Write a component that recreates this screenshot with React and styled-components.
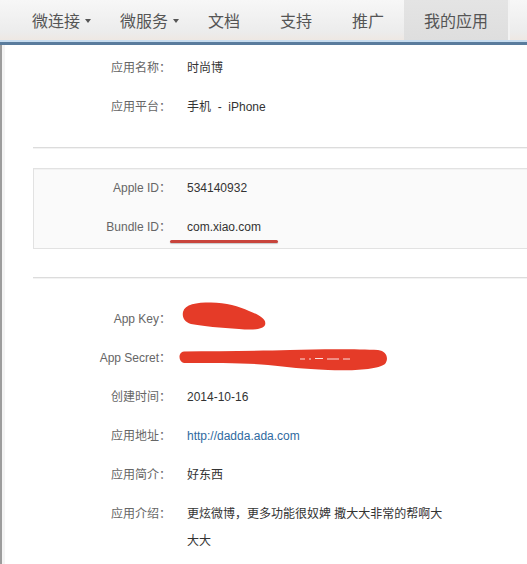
import styled, { createGlobalStyle } from "styled-components"

const GlobalStyle = createGlobalStyle`
    html, body {
        margin: 0;
        padding: 0;
        background: #fff;
    }
    body {
        font-family: "Liberation Sans", "Noto Sans CJK SC", sans-serif;
        overflow: hidden;
    }
`

const Header = styled.div`
    width: 100%;
`
const Nav = styled.div`
    height: 40px;
    display: flex;
    align-items: stretch;
    padding-left: 12px;
    background: linear-gradient(#f7f7f7 0%, #ececec 80%, #eee8e3 100%);
`
const NavItem = styled.div`
    display: flex;
    align-items: center;
    gap: 5px;
    padding: 0 ${props => props.$drop ? "9px" : "20px"} 0 20px;
    font-family: "Noto Sans CJK SC", sans-serif;
    font-size: 16px;
    color: #555;
    background: ${props => props.$active ? "linear-gradient(#e4e4e4, #dedede)" : "transparent"};
    border-right: ${props => props.$active ? "2px solid #f2f2f2" : "none"};
`
const Caret = styled.span`
    width: 0;
    height: 0;
    margin-top: 2px;
    border-left: 3px solid transparent;
    border-right: 3px solid transparent;
    border-top: 4px solid #555;
`
const BlueLine = styled.div`
    height: 3px;
    border-top: 2px solid #c8ddf0;
    background: #5a7c9d;
`
const Page = styled.div`
    min-height: 519px;
    border-left: 2px solid #9c9c9c;
    box-shadow: inset 3px 0 0 #f4f4f4;
    padding-top: 4px;
`
const Section = styled.div`
    display: flex;
    flex-direction: column;
`
const Divider = styled.div`
    margin: ${props => props.$margin};
    margin-left: 31px;
    border-top: 1px solid #dcdcdc;
    border-bottom: 1px solid #f3f3f3;
`
const Box = styled.div`
    margin-left: 31px;
    margin-right: -4px;
    background: #fafafa;
    border: 1px solid #e2e2e2;
    box-shadow: inset 0 1px 0 #f2f2f2;
    display: flex;
    flex-direction: column;
`
const Row = styled.div`
    display: grid;
    grid-template-columns: ${props => props.$labelWidth}px 1fr;
    padding: ${props => props.$pad || "6px 0"};
    font-size: 12px;
    line-height: 27px;
`
const Label = styled.div`
    text-align: right;
    color: #666;
    white-space: nowrap;
`
const Value = styled.div`
    position: relative;
    margin-left: 16px;
    color: #333;
    max-width: 265px;
`
const Link = styled.a`
    color: #2f6aa0;
    text-decoration: none;
`
const Underline = styled.div`
    position: absolute;
    left: -17px;
    top: 26px;
    width: 108px;
    height: 3px;
    border-radius: 2px;
    background: #c8443c;
    box-shadow: 0 1px 1px rgba(0, 0, 0, 0.2);
`
const Scribble = styled.svg`
    position: absolute;
    left: ${props => props.$left}px;
    top: ${props => props.$top}px;
`

const AppKeyMark = () => (
    <Scribble $left={-6} $top={-4} width="88" height="30" viewBox="0 0 88 30">
        <path
            d="M2 10 C 4 2, 15 0.5, 30 0.5 C 45 1, 58 4, 68 9 C 78 13, 86 17, 84 23 C 82 28, 70 28, 58 27 C 40 26, 22 24, 10 22 C 3 20, 1 15, 2 10 Z"
            fill="#e53b28"
        />
    </Scribble>
)

const AppSecretMark = () => (
    <Scribble $left={-9} $top={4} width="214" height="24" viewBox="0 0 214 24">
        <path
            d="M6 2.5 C 40 2, 80 2, 112 1 C 140 0, 180 0, 200 1 C 209 2, 211 10, 207 15 C 200 21, 170 22, 150 21 C 125 20, 110 18, 90 16 C 70 14, 40 14, 6 14 C 0 13, 0 3, 6 2.5 Z"
            fill="#e53b28"
        />
        <g stroke="#fff" strokeWidth="1" opacity="0.85">
            <line x1="122" y1="10" x2="127" y2="10" />
            <line x1="131" y1="10" x2="133" y2="10" />
            <line x1="137" y1="9.5" x2="145" y2="9.5" />
            <line x1="149" y1="10" x2="161" y2="10" />
            <line x1="165" y1="10" x2="172" y2="10" />
        </g>
    </Scribble>
)

const navItems = [
    { id: 1, name: "微连接", drop: true },
    { id: 2, name: "微服务", drop: true },
    { id: 3, name: "文档" },
    { id: 4, name: "支持" },
    { id: 5, name: "推广" },
    { id: 6, name: "我的应用", active: true },
]

const App = () => {
    return (
        <>
            <GlobalStyle />
            <Header>
                <Nav>
                    {navItems.map((item) => (
                        <NavItem key={item.id} $drop={item.drop} $active={item.active}>
                            {item.name}
                            {item.drop && <Caret />}
                        </NavItem>
                    ))}
                </Nav>
                <BlueLine />
            </Header>
            <Page>
                <Section>
                    <Row $labelWidth={169}>
                        <Label>应用名称：</Label>
                        <Value>时尚博</Value>
                    </Row>
                    <Row $labelWidth={169}>
                        <Label>应用平台：</Label>
                        <Value>手机&nbsp;&nbsp;-&nbsp;&nbsp;iPhone</Value>
                    </Row>
                </Section>
                <Divider $margin="20px 0 19px" />
                <Box>
                    <Row $labelWidth={137} $pad="6px 0 6px">
                        <Label>Apple ID：</Label>
                        <Value>534140932</Value>
                    </Row>
                    <Row $labelWidth={137} $pad="6px 0 7px">
                        <Label>Bundle ID：</Label>
                        <Value>
                            com.xiao.com
                            <Underline />
                        </Value>
                    </Row>
                </Box>
                <Divider $margin="28px 0 21px" />
                <Section>
                    <Row $labelWidth={169}>
                        <Label>App Key：</Label>
                        <Value>
                            &nbsp;
                            <AppKeyMark />
                        </Value>
                    </Row>
                    <Row $labelWidth={169}>
                        <Label>App Secret：</Label>
                        <Value>
                            &nbsp;
                            <AppSecretMark />
                        </Value>
                    </Row>
                    <Row $labelWidth={169}>
                        <Label>创建时间：</Label>
                        <Value>2014-10-16</Value>
                    </Row>
                    <Row $labelWidth={169}>
                        <Label>应用地址：</Label>
                        <Value>
                            <Link href="#">http://dadda.ada.com</Link>
                        </Value>
                    </Row>
                    <Row $labelWidth={169}>
                        <Label>应用简介：</Label>
                        <Value>好东西</Value>
                    </Row>
                    <Row $labelWidth={169}>
                        <Label>应用介绍：</Label>
                        <Value>更炫微博，更多功能很奴婢 撒大大非常的帮啊大大大</Value>
                    </Row>
                </Section>
            </Page>
        </>
    )
}

export default App
